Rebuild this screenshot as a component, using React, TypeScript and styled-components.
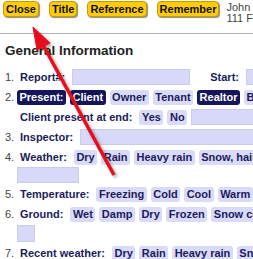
import React from 'react';
import styled, {createGlobalStyle} from 'styled-components';

const Global = createGlobalStyle`
  html, body {
    margin: 0;
    padding: 0;
    background: #fff;
    overflow: hidden;
  }
  body {
    font-family: "Liberation Sans", Arial, sans-serif;
  }
`;

const Page = styled.div`
  position: relative;
  width: 253px;
  height: 259px;
  overflow: hidden;
  white-space: nowrap;
`;

const Toolbar = styled.div`
  display: flex;
  align-items: flex-start;
  gap: 10px;
  height: 34px;
  box-sizing: border-box;
  padding: 1px 3px 0;
  border-bottom: 1px solid #b4b4b4;
`;

const Button = styled.button`
  flex: none;
  height: 16px;
  padding: 0 2px;
  border: 1px solid #c99a00;
  border-radius: 4px;
  background: #ffcc0a;
  box-shadow: 1px 1px 1px rgba(0, 0, 0, 0.45);
  font: bold 11px/14px "Liberation Sans", Arial, sans-serif;
  color: #111;
`;

const Client = styled.div`
  flex: none;
  margin-left: -3px;
  padding-top: 1px;
  font-size: 11px;
  line-height: 10.5px;
  color: #444;
`;

const Heading = styled.h2`
  margin: 9px 0 8px 5px;
  font-size: 13.5px;
  line-height: 16px;
  font-weight: bold;
  color: #222;
`;

const Item = styled.div`
  display: flex;
  padding-left: 5px;
`;

const Num = styled.div`
  flex: none;
  width: 12px;
  height: 20px;
  line-height: 20px;
  font-size: 11px;
  color: #444;
`;

const Body = styled.div`
  display: flex;
  flex-direction: column;
`;

const Line = styled.div`
  display: flex;
  align-items: center;
  gap: 4px;
  height: 20px;
`;

const Extra = styled.div<{$h: number; $w: number; $top?: number}>`
  margin: ${(p) => p.$top ?? 0}px 0 1px 0;
  width: ${(p) => p.$w}px;
  height: ${(p) => p.$h}px;
  box-sizing: border-box;
  background: #d8d8f8;
  border: 1px solid #cbcbef;
`;

const Chip = styled.span<{$on?: boolean; $plain?: boolean}>`
  flex: none;
  padding: 0 2.5px;
  height: 15px;
  line-height: 15px;
  border-radius: 3px;
  font-size: 11px;
  font-weight: bold;
  background: ${(p) => (p.$plain ? 'transparent' : p.$on ? '#15155a' : '#dadaf9')};
  color: ${(p) => (p.$on ? '#fff' : '#1b1b5c')};
`;

const Label = styled(Chip).attrs({$plain: true})<{$gap?: number}>`
  padding: 0 3px;
  margin-left: ${(p) => p.$gap ?? 0}px;
`;

const Field = styled.div<{$w: number}>`
  flex: none;
  width: ${(p) => p.$w}px;
  height: 16px;
  box-sizing: border-box;
  background: #d8d8f8;
  border: 1px solid #cbcbef;
`;

const Arrow = styled.svg`
  position: absolute;
  left: 0;
  top: 0;
  pointer-events: none;
`;

const chips = (list: string[], on: string[] = []) =>
  list.map((c) => (
    <Chip key={c} $on={on.includes(c)}>
      {c}
    </Chip>
  ));

export default function App() {
  return (
    <Page>
      <Global />
      <Toolbar>
        <Button>Close</Button>
        <Button>Title</Button>
        <Button>Reference</Button>
        <Button>Remember</Button>
        <Client>
          John
          <br />
          111 F
        </Client>
      </Toolbar>
      <Heading>General Information</Heading>

      <Item>
        <Num>1.</Num>
        <Body>
          <Line>
            <Label>Report#:</Label>
            <Field $w={118} />
            <Label $gap={13}>Start:</Label>
            <Field $w={80} />
          </Line>
        </Body>
      </Item>

      <Item>
        <Num>2.</Num>
        <Body>
          <Line>
            <Chip $on>Present:</Chip>
            {chips(['Client', 'Owner', 'Tenant', 'Realtor', 'Buyer'], ['Client', 'Realtor'])}
          </Line>
          <Line>
            <Label>Client present at end:</Label>
            {chips(['Yes', 'No'])}
            <Field $w={120} />
          </Line>
        </Body>
      </Item>

      <Item>
        <Num>3.</Num>
        <Body>
          <Line>
            <Label>Inspector:</Label>
            <Field $w={200} />
          </Line>
        </Body>
      </Item>

      <Item>
        <Num>4.</Num>
        <Body>
          <Line>
            <Label>Weather:</Label>
            {chips(['Dry', 'Rain', 'Heavy rain', 'Snow, hail'])}
          </Line>
          <Extra $w={62} $h={16} />
        </Body>
      </Item>

      <Item>
        <Num>5.</Num>
        <Body>
          <Line>
            <Label>Temperature:</Label>
            {chips(['Freezing', 'Cold', 'Cool', 'Warm', 'Hot'])}
          </Line>
        </Body>
      </Item>

      <Item>
        <Num>6.</Num>
        <Body>
          <Line>
            <Label>Ground:</Label>
            {chips(['Wet', 'Damp', 'Dry', 'Frozen', 'Snow covered'])}
          </Line>
          <Extra $w={18} $h={17} $top={1} />
        </Body>
      </Item>

      <Item>
        <Num>7.</Num>
        <Body>
          <Line>
            <Label>Recent weather:</Label>
            {chips(['Dry', 'Rain', 'Heavy rain', 'Snow'])}
          </Line>
        </Body>
      </Item>

      <Arrow width={253} height={259} viewBox="0 0 253 259">
        <defs>
          <filter id="sh" x="-20%" y="-20%" width="160%" height="160%">
            <feDropShadow dx="2" dy="2" stdDeviation="1.5" floodColor="#000" floodOpacity="0.35" />
          </filter>
        </defs>
        <g filter="url(#sh)" fill="#e8111b" stroke="#e8111b">
          <line x1={43} y1={45} x2={114} y2={175} strokeWidth={3.5} />
          <polygon points="33,27 37,50 50,43" strokeWidth={1} strokeLinejoin="round" />
        </g>
      </Arrow>
    </Page>
  );
}
